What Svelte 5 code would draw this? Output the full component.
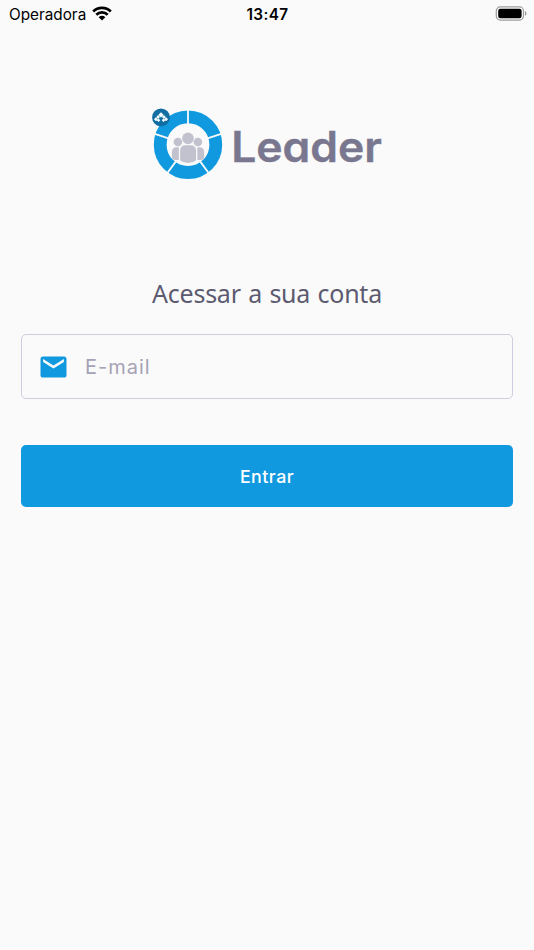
<script>
    let email = '';

    const segments = [0, 72, 144, 216, 288];
</script>

<div class="screen">

    <header class="status">
        <div class="carrier">
            <span>Operadora</span>
            <svg width="20" height="15" viewBox="0 0 20 15">
                <path d="M1.2 5.5 A12.5 12.5 0 0 1 18.8 5.5" />
                <path d="M4.3 8.7 A8.1 8.1 0 0 1 15.7 8.7" />
                <path d="M10 14.6 L6.7 11.2 A4.7 4.7 0 0 1 13.3 11.2 Z" class="dot" />
            </svg>
        </div>
        <time>13:47</time>
        <div class="battery">
            <svg width="32" height="16" viewBox="0 0 32 16">
                <rect x="1.3" y="0.9" width="27.2" height="13.2" rx="4" fill="none" stroke="#9d9d9d" stroke-width="1.2" />
                <rect x="3.2" y="2.8" width="23.4" height="9.4" rx="2.2" fill="black" />
                <path d="M30 5.3 C32 5.9 32 9.1 30 9.7 Z" fill="#9d9d9d" />
            </svg>
        </div>
    </header>

    <div class="logo">
        <svg width="240" height="80" viewBox="148 104 240 80">
            <circle cx="188" cy="144.7" r="27.8" fill="none" stroke="#1199df" stroke-width="12.8" />
            {#each segments as angle}
                <line
                    x1="188"
                    y1="109"
                    x2="188"
                    y2="125"
                    stroke="#fafafa"
                    stroke-width="1.8"
                    transform="rotate({angle} 188 144.7)"
                />
            {/each}
            <g fill="#c2c1ce">
                <circle cx="177.9" cy="142" r="4.3" />
                <circle cx="197.9" cy="142" r="4.3" />
                <path d="M178.9 147.2 H177 Q171.9 147.2 171.9 152.5 V156.5 Q171.9 160 175.5 160 H178.9 Z" />
                <path d="M197.4 147.2 H199 Q204.2 147.2 204.2 152.5 V156.5 Q204.2 160 200.6 160 H197.4 Z" />
                <circle cx="188" cy="138.4" r="5.8" />
                <path d="M180.1 151 Q180.1 145.3 185.5 145.3 H190.6 Q196.1 145.3 196.1 151 V160.2 Q192.6 163.1 188 163.1 Q183.4 163.1 180.1 160.2 Z" />
            </g>
            <circle cx="161" cy="117.4" r="8.9" fill="#126da3" />
            <g fill="#f4fbff">
                <rect x="-1.9" y="-1.9" width="3.8" height="3.8" rx="0.5" transform="translate(161 114.9) rotate(45)" />
                <rect x="-1.4" y="-1.4" width="2.8" height="2.8" rx="0.4" transform="translate(158.1 117) rotate(45)" />
                <rect x="-1.4" y="-1.4" width="2.8" height="2.8" rx="0.4" transform="translate(163.9 117) rotate(45)" />
                <rect x="-1.4" y="-1.4" width="2.8" height="2.8" rx="0.4" transform="translate(155.9 119.2) rotate(45)" />
                <rect x="-1.4" y="-1.4" width="2.8" height="2.8" rx="0.4" transform="translate(166.1 119.2) rotate(45)" />
                <rect x="-1.3" y="-1.3" width="2.6" height="2.6" rx="0.4" transform="translate(158.5 120.2) rotate(45)" />
                <rect x="-1.3" y="-1.3" width="2.6" height="2.6" rx="0.4" transform="translate(163.5 120.2) rotate(45)" />
            </g>
            <text x="231.2" y="161.5" textLength="150.8" lengthAdjust="spacingAndGlyphs">Leader</text>
        </svg>
    </div>

    <h1>Acessar a sua conta</h1>

    <form on:submit|preventDefault>
        <label class="field">
            <svg width="27" height="22" viewBox="0 0 27 22">
                <rect x="0.5" y="0.5" width="26" height="21" rx="2.6" fill="#1199df" />
                <path d="M3.1 3.1 L13.5 9.6 L23.9 3.1 V6 L13.5 12.6 L3.1 6 Z" fill="#fafafa" />
            </svg>
            <input type="text" placeholder="E-mail" bind:value={email} />
        </label>
        <button type="submit">Entrar</button>
    </form>

</div>

<style>
    :global(body) {
        background-color: #fafafa;
    }

    .screen {
        box-sizing: border-box;
        min-height: 950px;
        font-family: Inter, sans-serif;
    }

    .status {
        display: grid;
        grid-template-columns: 1fr auto 1fr;
        align-items: center;
        height: 28px;
        padding: 0 7px 0 9px;
        font-size: 15.3px;
        color: black;
    }

    .carrier {
        display: flex;
        align-items: center;
        gap: 6px;
    }

    .carrier svg {
        margin-bottom: 2px;
    }

    .carrier path {
        fill: none;
        stroke: black;
        stroke-width: 2.7;
    }

    .carrier .dot {
        fill: black;
        stroke: none;
    }

    time {
        margin-right: 1px;
        font-weight: 600;
        letter-spacing: 0.4px;
    }

    .battery {
        display: flex;
        justify-content: flex-end;
    }

    .logo {
        padding: 76px 0 0 148px;
    }

    .logo svg {
        display: block;
    }

    .logo text {
        font-size: 42px;
        font-weight: 600;
        font-feature-settings: "cv11";
        fill: #79778f;
        stroke: #79778f;
        stroke-width: 0.4;
    }

    h1 {
        margin: 91px 0 0;
        font-family: "Noto Sans", sans-serif;
        font-size: 25px;
        font-weight: 400;
        line-height: 36px;
        letter-spacing: -0.25px;
        word-spacing: 1.2px;
        text-align: center;
        color: #5c5a70;
    }

    form {
        padding: 23px 21px 0;
    }

    .field {
        display: flex;
        align-items: center;
        gap: 18px;
        box-sizing: border-box;
        height: 65px;
        padding: 0 19px 0 18px;
        border: 1.5px solid #cfcee0;
        border-radius: 5px;
    }

    input {
        flex: 1;
        min-width: 0;
        padding: 0;
        border: none;
        outline: none;
        background: none;
        font-family: inherit;
        font-size: 20px;
        letter-spacing: 1px;
        color: #5c5a70;
    }

    input::placeholder {
        color: #a5a3b5;
        opacity: 1;
    }

    button {
        display: block;
        width: 100%;
        height: 62px;
        margin-top: 46px;
        padding: 0;
        border: none;
        border-radius: 5px;
        background-color: #1199df;
        font-family: inherit;
        font-size: 17.8px;
        font-weight: 500;
        letter-spacing: 0.5px;
        color: white;
    }
</style>
